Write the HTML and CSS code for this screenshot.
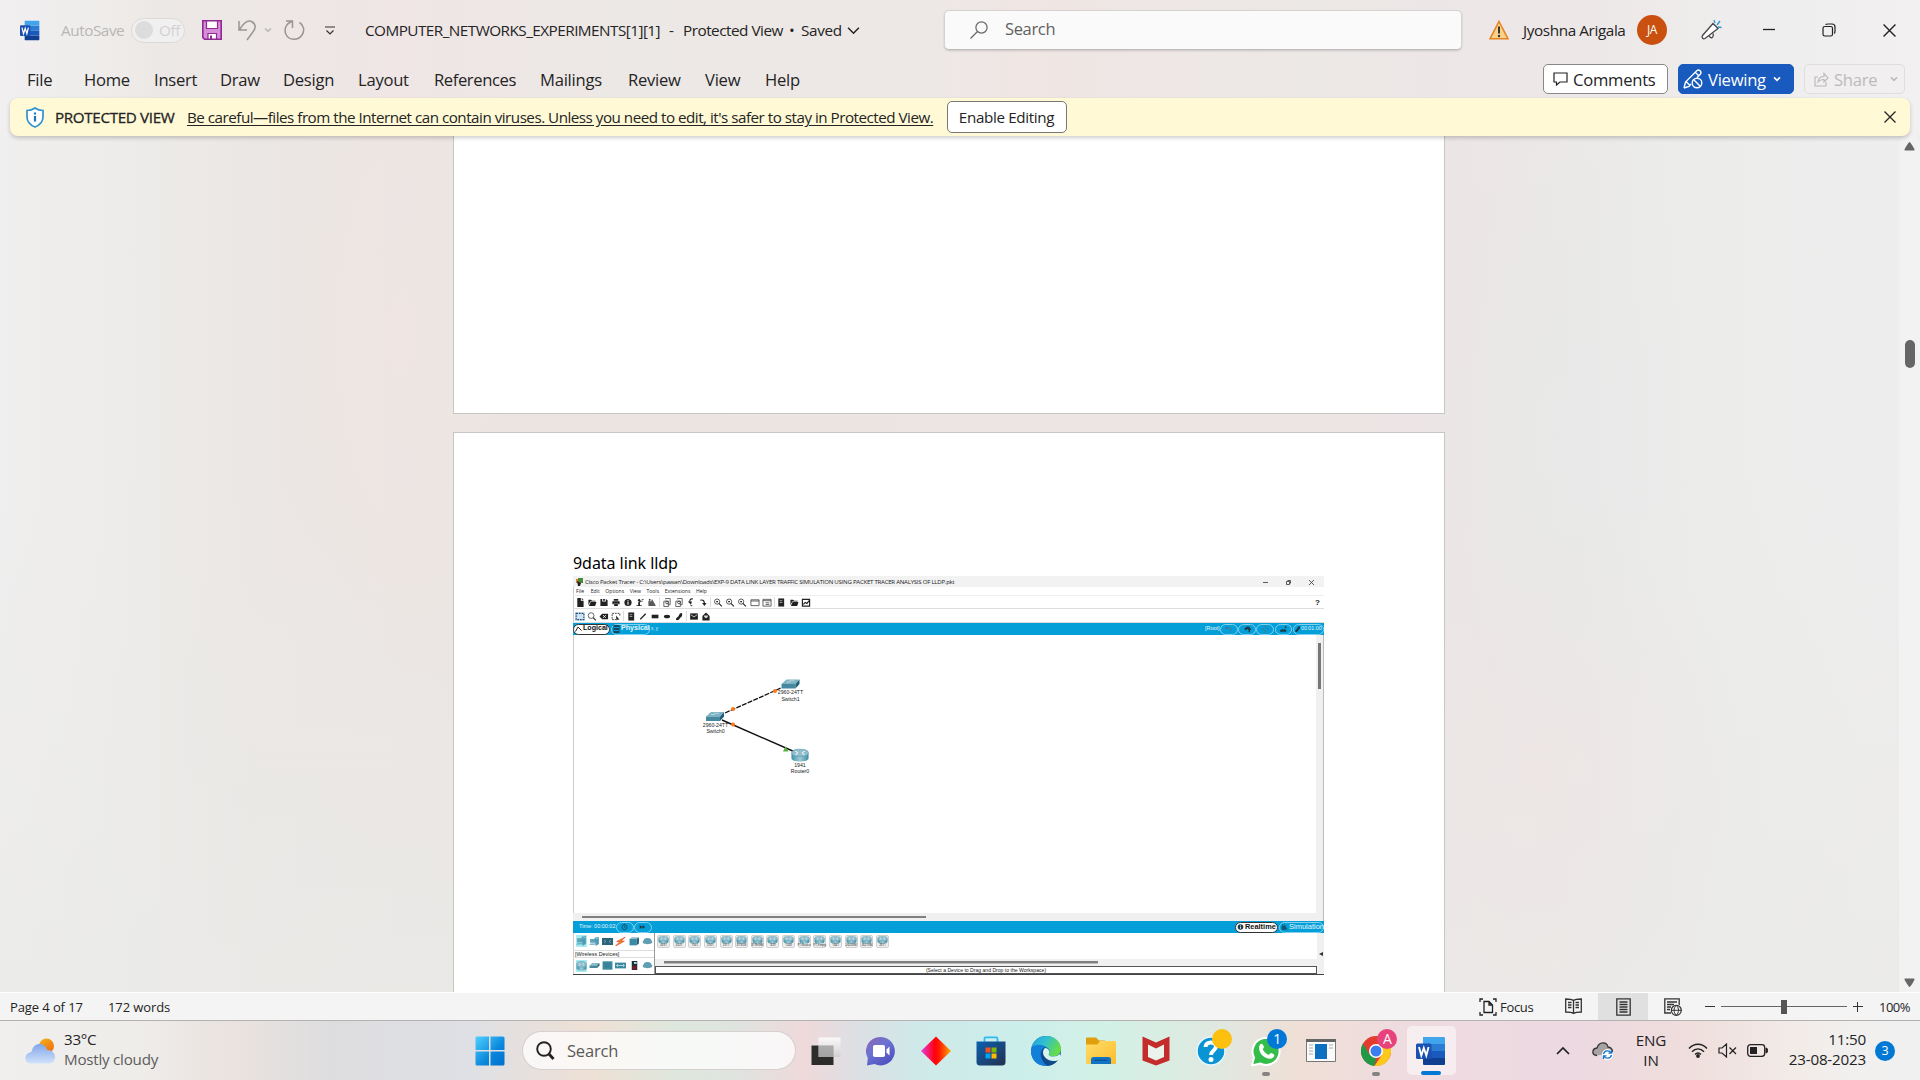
FILE: index.html
```html
<!DOCTYPE html>
<html lang="en">
<head>
<meta charset="utf-8">
<title>COMPUTER_NETWORKS_EXPERIMENTS - Word</title>
<link rel="stylesheet" href="styles.css">
</head>
<body>
<svg class="defs" width="0" height="0">
  <defs>
    <linearGradient id="gWin" x1="0" y1="0" x2="1" y2="1"><stop offset="0" stop-color="#4fd0ff"/><stop offset=".6" stop-color="#0a86dc"/><stop offset="1" stop-color="#0070cc"/></linearGradient>
    <linearGradient id="gCloud" x1="0" y1="0" x2="0" y2="1"><stop offset="0" stop-color="#82a6ea"/><stop offset="1" stop-color="#d0e2fa"/></linearGradient>
    <linearGradient id="gSun" x1="0" y1="0" x2=".6" y2="1"><stop offset="0" stop-color="#f0b323"/><stop offset="1" stop-color="#f2700a"/></linearGradient>
    <linearGradient id="gChat" x1="0" y1="0" x2=".7" y2="1"><stop offset="0" stop-color="#8f62ae"/><stop offset=".45" stop-color="#6d74d2"/><stop offset="1" stop-color="#4e4fc0"/></linearGradient>
    <linearGradient id="gDia"><stop offset="0" stop-color="#e73ce0"/><stop offset=".45" stop-color="#ff0010"/><stop offset=".6" stop-color="#ff1800"/><stop offset="1" stop-color="#ffa800"/></linearGradient>
    <linearGradient id="gStore" x1="0" y1="0" x2="1" y2="1"><stop offset="0" stop-color="#0d60b0"/><stop offset="1" stop-color="#23304f"/></linearGradient>
    <linearGradient id="gEdge" x1="0" y1="0" x2="1" y2=".4"><stop offset="0" stop-color="#1c9ee0"/><stop offset=".5" stop-color="#32c0cf"/><stop offset="1" stop-color="#66dc48"/></linearGradient>
    <linearGradient id="gFold" x1="0" y1="0" x2="1" y2="1"><stop offset="0" stop-color="#ffdc6a"/><stop offset="1" stop-color="#fbbd2c"/></linearGradient>
    <linearGradient id="gTv" x1="0" y1="0" x2="0" y2="1"><stop offset="0" stop-color="#fff"/><stop offset="1" stop-color="#cfcfcf"/></linearGradient>
    <linearGradient id="gDev" x1="0" y1="0" x2="1" y2="0"><stop offset="0" stop-color="#3f93ab"/><stop offset=".5" stop-color="#9fcbd6"/><stop offset="1" stop-color="#3f8ba2"/></linearGradient>
    <symbol id="word" viewBox="0 0 30 30">
      <path d="M7 1h21a1 1 0 0 1 1 1v6H7z" fill="#41a5ee"/><path d="M7 8h22v7H7z" fill="#2b7cd3"/><path d="M7 15h22v7H7z" fill="#185abd"/><path d="M7 22h22v6a1 1 0 0 1-1 1H8a1 1 0 0 1-1-1z" fill="#103f91"/>
      <rect x="0" y="7.500" width="15.500" height="15.500" rx="1.500" fill="#1a50b0"/><path d="M3 11l2.300 8.500L7.800 12l2.500 7.500L12.600 11" fill="none" stroke="#fff" stroke-width="1.900"/>
    </symbol>
    <symbol id="chev" viewBox="0 0 12 8"><path d="M1 1.500l5 5 5-5" fill="none" stroke="currentColor" stroke-width="1.400"/></symbol>
    <symbol id="chevb" viewBox="0 0 12 8"><path d="M1.500 1.500L6 6l4.500-4.500" fill="none" stroke="currentColor" stroke-width="2.300"/></symbol>
    <symbol id="close" viewBox="0 0 12 12"><path d="M.5.5l11 11M11.500.5l-11 11" stroke="currentColor" stroke-width="1.300" fill="none"/></symbol>
    <symbol id="doc" viewBox="0 0 10 10"><path d="M2 0h4v3h3v7H2zM7 0l2 2H7z"/></symbol>
    <symbol id="folder" viewBox="0 0 10 10"><path d="M1 2h3l1 1h4v1H3L1 8zM3.500 4.500H10L8.500 9H1.500z"/></symbol>
    <symbol id="floppy" viewBox="0 0 10 10"><path d="M1 1h2v3h4V1l2 1.500V9H1zM4 1h2v2H4z"/></symbol>
    <symbol id="print" viewBox="0 0 10 10"><path d="M2.500 1h5v2h-5zM1 3.500h8V7H7.500V6h-5v1H1zM3 6.500h4V9H3z"/></symbol>
    <symbol id="info" viewBox="0 0 10 10"><circle cx="5" cy="5" r="4"/><path d="M5 2.500v1M5 4.300v3.200" stroke="#fff" stroke-width="1.200"/></symbol>
    <symbol id="time" viewBox="0 0 10 10"><circle cx="5" cy="5.300" r="3.500" fill="none" stroke="#1a3c49" stroke-width="1.100"/><path d="M4 .8h2M5 3.500v2l1.500.5" fill="none" stroke="#1a3c49"/></symbol>
    <symbol id="user" viewBox="0 0 10 10"><path d="M1 9h6V8H5V5l1-1h2V3H5L3 5v3H1zM7 1h2v1H7z"/><circle cx="4" cy="2.500" r="1.300"/></symbol>
    <symbol id="tri" viewBox="0 0 10 10"><path d="M1 9V3l3 1 1-3 4 7v1z" fill-opacity=".75"/><circle cx="2.500" cy="2" r="1"/></symbol>
    <symbol id="hill" viewBox="0 0 10 10"><path d="M0 9V7l3-2 2 1 2-1 2 2v2z"/><circle cx="8" cy="2.500" r="1.300"/></symbol>
    <symbol id="copy" viewBox="0 0 10 10"><path d="M1.500 3.500h5v6h-5zM3.500 1.500v-1h5v7h-2" fill="none" stroke="#555"/><circle cx="5" cy="5" r="1.500" fill="none" stroke="#444"/></symbol>
    <symbol id="undo" viewBox="0 0 10 10"><path d="M7 1C4.500.5 3.500 2 3.700 4" fill="none" stroke="#222" stroke-width="1.300"/><path d="M1.500 4h4.500L5 7.500z"/><path d="M4.500 8.500h2" stroke="#222"/></symbol>
    <symbol id="redo" viewBox="0 0 10 10"><path d="M2 2.500c3-.8 4.500.5 4.500 3.500" fill="none" stroke="#222" stroke-width="1.300"/><path d="M4 5.500h5L6.500 9z"/></symbol>
    <symbol id="back" viewBox="0 0 10 10"><path d="M3 1.500L1 3.500l2 2M1 3.500h5c3 0 3 4 1 5" fill="none" stroke="#53707b" stroke-width="1.400"/></symbol>
    <symbol id="move" viewBox="0 0 10 10"><path d="M5 0v3M5 7v3M0 5h3M7 5h3" stroke="#53707b" stroke-width="1.600"/></symbol>
    <symbol id="zoomi" viewBox="0 0 10 10"><circle cx="4" cy="4" r="2.900" fill="none" stroke="#333" stroke-width=".9"/><path d="M6 6l3.300 3.300M3 4h2" stroke="#222" stroke-width="1.200"/></symbol>
    <symbol id="mag" viewBox="0 0 10 10"><circle cx="4" cy="4" r="3.200" fill="none" stroke="#444" stroke-width=".9"/><path d="M6.300 6.300l3 3" stroke="#222" stroke-width="1.200"/></symbol>
    <symbol id="win" viewBox="0 0 10 10"><path d="M.5 2h9v6.500h-9zM.5 3.300h9" fill="none" stroke="#444" stroke-width=".9"/></symbol>
    <symbol id="list" viewBox="0 0 10 10"><path d="M.5 1.500h9v7.500h-9zM.5 3h9M3.500 5.300h4M3.500 7.200h4" fill="none" stroke="#444" stroke-width=".9"/></symbol>
    <symbol id="note" viewBox="0 0 10 10"><path d="M2 .5h6.500v9H2z"/><path d="M3.500 3h3M3.500 5h3" stroke="#ccc" stroke-width=".8"/></symbol>
    <symbol id="chart" viewBox="0 0 10 10"><path d="M1 1.500h8v7.500H1zM2 7l2-2 2 1 2.500-3" fill="none" stroke="#222" stroke-width="1.300"/></symbol>
    <symbol id="sel" viewBox="0 0 10 10"><path d="M.7 1.500h8.600v7H.7z" fill="none" stroke="#2a4c68" stroke-width="1.200" stroke-dasharray="2 1"/></symbol>
    <symbol id="sel2" viewBox="0 0 10 10"><path d="M9.300 4V1.500H.7v7H5" fill="none" stroke="#444" stroke-width="1.100" stroke-dasharray="2 1"/><path d="M5 4l4 4.500-2-.3-1.500 1.300z"/></symbol>
    <symbol id="del" viewBox="0 0 10 10"><path d="M0 5l3-3h6.500v6H3z"/><path d="M4 3.500l3 3M7 3.500l-3 3" stroke="#fff"/></symbol>
    <symbol id="line" viewBox="0 0 10 10"><path d="M2 8l6-6" stroke="#222" stroke-width="1.400"/></symbol>
    <symbol id="rect" viewBox="0 0 10 10"><path d="M1.300 3h7.500v4H1.300z"/></symbol>
    <symbol id="oval" viewBox="0 0 10 10"><ellipse cx="5" cy="5" rx="3.500" ry="2"/></symbol>
    <symbol id="blob" viewBox="0 0 10 10"><path d="M2 9C.5 6.500 4 6 5 3.500 6 1 9 0 8.500 3.500 8 6 7 5 6 7S3 9.500 2 9z"/></symbol>
    <symbol id="mail" viewBox="0 0 10 10"><path d="M.7 1.500h8.600v7H.7z"/><path d="M1.500 3L5 5.500 8.500 3" stroke="#fff" stroke-width=".8" fill="none"/></symbol>
    <symbol id="omail" viewBox="0 0 10 10"><path d="M1 4.500L5 .5l4 4v5H1z"/><path d="M3 4h4v1.500L5 7 3 5.500z" fill="#ddd"/></symbol>
    <symbol id="hut" viewBox="0 0 10 10"><path d="M0 5l4-3.500h3L10 5v1.500H8.500v3H6.500V6l-2-1-1.500 2z"/></symbol>
    <symbol id="router" viewBox="0 0 20 14" preserveAspectRatio="none"><path d="M1 5v5c0 2 4 3.500 9 3.500s9-1.500 9-3.500V5z" fill="url(#gDev)"/><ellipse cx="10" cy="4.500" rx="9" ry="4" fill="#8fbdcb" stroke="#5b9bb0" stroke-width=".6"/><path d="M5 3l3 1.200M15 3l-3 1.200M5 6.300L8 5M15 6.300L12 5" stroke="#f3fafc" stroke-width="1"/></symbol>
    <symbol id="switch" viewBox="0 0 20 11"><path d="M1 5.500L6 1h13l-4 4.500z" fill="#7fb2c3"/><path d="M1 5.500h14V10H1z" fill="#4589a1"/><path d="M15 5.500L19 1v4.500L15 10z" fill="#215e79"/><path d="M6 3.500h4M9 2.300h5" stroke="#d8edf3" stroke-width=".6"/></symbol>
    <symbol id="pc" viewBox="0 0 20 14" preserveAspectRatio="none"><path d="M10 1l8-1v11l-6 3z" fill="#4e9cb5"/><path d="M2 3h9v6H2zM0 12h10l2-2H3z" fill="#5fa3b9"/><path d="M13 3l4-1" stroke="#c5e1e9"/></symbol>
    <symbol id="box" viewBox="0 0 20 14" preserveAspectRatio="none"><path d="M1 .5h18v13H1z" fill="#3b88a1"/><path d="M5 5h10M5 9h10" stroke="#2f7188"/></symbol>
    <symbol id="hub" viewBox="0 0 20 14" preserveAspectRatio="none"><path d="M0 1.500h20v11H0z" fill="#2c6379"/><path d="M4 5l3 2-3 2M16 5l-3 2 3 2" stroke="#a7ccd8" fill="none"/></symbol>
    <symbol id="wan" viewBox="0 0 20 14" preserveAspectRatio="none"><path d="M0 2.500h20v9H0z" fill="#3b88a1"/><path d="M3 7h14M5 5L3 7l2 2M15 5l2 2-2 2" stroke="#d5e9ef" stroke-width="1.300" fill="none"/></symbol>
    <symbol id="file" viewBox="0 0 20 14" preserveAspectRatio="none"><path d="M1 3h13v10H1z" fill="#3b8ba5"/><path d="M1 3l4-2.500h13L14 3z" fill="#8dbdcb"/><path d="M14 3l4-2.500V10l-4 3z" fill="#215e79"/></symbol>
    <symbol id="bolt" viewBox="0 0 20 14" preserveAspectRatio="none"><path d="M19 0L3 7l6 0-8 7 16-7.500-6-.5z" fill="#f78a1f" stroke="#d73c1c" stroke-width="1"/></symbol>
    <symbol id="cloudd" viewBox="0 0 20 14" preserveAspectRatio="none"><path d="M2 10a3.500 3.500 0 0 1 1-5 7 5 0 0 1 14 0 3.500 3.500 0 0 1 1 5c-3 3-13 3-16 0z" fill="#5f9db2"/></symbol>
    <symbol id="phone" viewBox="0 0 20 14" preserveAspectRatio="none"><path d="M5 0h10v14H5z" fill="#14303b"/><path d="M6 8h8v5H6z" fill="#7d1d22"/><path d="M9 1.500h5v3H9z" fill="#bed5dc"/></symbol>
  </defs>
</svg>

<div class="app">
  <header class="titlebar">
    <div class="quick">
      <svg class="wlogo" width="20" height="21" viewBox="0 0 30 30" preserveAspectRatio="none"><use href="#word" width="30" height="30"/></svg>
      <span class="autosave">AutoSave</span>
      <span class="toggle"><i></i><b>Off</b></span>
      <svg class="save" width="20" height="20" viewBox="0 0 20 20"><path d="M.8.8h18.400v18.400H2.500L.8 17.500z" fill="#d68ed8" stroke="#902a94" stroke-width="1.600"/><path d="M4.500 1v7.500h11V1zM6 19v-5.500h8.500V19z" fill="#fff" stroke="#902a94" stroke-width="1.200"/><path d="M8 15.500h2v3.500H8z" fill="#902a94"/></svg>
      <svg class="undo" width="19" height="21" viewBox="0 0 19 21"><path d="M1 1v9h8M1.500 9.500C5 4 9-.5 13.500 1.500c5 2.500 4.500 7.500 1 11L9 20" fill="none" stroke="#989593" stroke-width="1.500"/></svg>
      <svg class="uchev" width="8" height="6"><use href="#chevb"/></svg>
      <svg class="redo" width="21" height="21" viewBox="0 0 21 21"><path d="M2 1h6.500v7M8 1.500C.5 4 .3 11 2 14.500c3 6 12 6.500 16 .5 3.200-5 1.500-10-2.500-12.500" fill="none" stroke="#989593" stroke-width="1.500"/></svg>
      <svg class="cust" width="10" height="9" viewBox="0 0 10 9"><path d="M0 1h10M1.500 4.500L5 8l3.500-3.500" fill="none" stroke="#333" stroke-width="1.200"/></svg>
    </div>
    <div class="doctitle">
      <span class="fname">COMPUTER_NETWORKS_EXPERIMENTS[1][1]</span><span class="dash">-</span><span class="pview">Protected View</span><span class="dot">•</span><span class="saved">Saved</span>
      <svg width="13" height="9"><use href="#chev"/></svg>
    </div>
    <div class="search"><svg width="18" height="18" viewBox="0 0 18 18"><circle cx="11.500" cy="6.500" r="5.600" fill="none" stroke="#666" stroke-width="1.200"/><path d="M7.500 10.500L.5 17.500" stroke="#666" stroke-width="1.300"/></svg><span>Search</span></div>
    <div class="account">
      <svg width="20" height="20" viewBox="0 0 20 20"><path d="M10 1.500L19 18.800H1z" fill="#fbd28b" stroke="#e58424" stroke-width="1.600"/><path d="M10 6.500v7" stroke="#333" stroke-width="2"/><circle cx="10" cy="16" r="1.200" fill="#333"/></svg>
      <span class="uname">Jyoshna Arigala</span>
      <span class="avatar">JA</span>
      <svg class="mega" width="21" height="21" viewBox="0 0 21 21"><path d="M1.500 15.500L12 3.500l5 5L4 18.500c-2 1-3.500-1-2.500-3zM8.500 16c1 3 4.500 2 3.500-2.500" fill="#fff" stroke="#444" stroke-width="1.300"/><path d="M13 0l1 3M19 1l-3 4M20.500 7.500l-3.500-.5" stroke="#2f93cf" stroke-width="1.300"/></svg>
    </div>
    <div class="winbtns">
      <svg width="12" height="12" viewBox="0 0 12 12"><path d="M0 5.500h12" stroke="#222" stroke-width="1.300"/></svg>
      <svg width="14" height="14" viewBox="0 0 14 14"><rect x="1" y="3.500" width="9.500" height="9.500" rx="1.800" fill="none" stroke="#222" stroke-width="1.200"/><path d="M3.500 1.500C4 1 5 1 6 1h4c2 0 3 1.300 3 3v4c0 1 0 2-.8 2.500" fill="none" stroke="#222" stroke-width="1.200"/></svg>
      <svg width="13" height="13"><use href="#close"/></svg>
    </div>
  </header>

  <nav class="ribbon">
    <div class="tabs"><span>File</span><span>Home</span><span>Insert</span><span>Draw</span><span>Design</span><span>Layout</span><span class="tight">References</span><span>Mailings</span><span>Review</span><span>View</span><span>Help</span></div>
    <div class="actions">
      <span class="btn comments"><svg width="15" height="14" viewBox="0 0 15 14"><path d="M1 1h13v9H7l-3.500 3v-3H1z" fill="none" stroke="#222" stroke-width="1.200"/></svg>Comments</span>
      <span class="btn viewing"><svg width="20" height="20" viewBox="0 0 20 20"><path d="M1 19l1.500-6L14 1.500c2-1.500 5 1 3.500 3.500L14 8.500M8 15l-2 2.500L1 19M3 12.500l4 4M12.500 3.500l3.500 3.500" fill="none" stroke="#fff" stroke-width="1.400"/><circle cx="14" cy="14" r="4.800" fill="none" stroke="#fff" stroke-width="1.400"/><path d="M10.500 10.500l7 7" stroke="#fff" stroke-width="1.400"/></svg>Viewing<svg class="c" width="8" height="6"><use href="#chevb"/></svg></span>
      <span class="btn share"><svg width="15" height="15" viewBox="0 0 15 15"><path d="M4 5H1v9h11v-4M4 10c.5-4 3-5.500 6-5.500V1.500L14 6l-4 4V7.500C7.500 7.500 5.500 8 4 10z" fill="none" stroke="#b9b9b9" stroke-width="1.100"/></svg>Share<svg class="c" width="8" height="6"><use href="#chevb"/></svg></span>
    </div>
  </nav>

  <div class="notice">
    <svg width="18" height="21" viewBox="0 0 18 21"><path d="M9 1c2.500 1.800 5 2.500 8 2.500V10c0 5-3 8-8 10-5-2-8-5-8-10V3.500C4 3.500 6.500 2.800 9 1z" fill="#fff" stroke="#2f93cf" stroke-width="1.700"/><path d="M9 5.500v2M9 9v5.500" stroke="#1b75bb" stroke-width="2.200"/></svg>
    <span class="ptitle">PROTECTED VIEW</span>
    <span class="pmsg">Be careful—files from the Internet can contain viruses. Unless you need to edit, it's safer to stay in Protected View.</span>
    <span class="enable">Enable Editing</span>
    <svg class="x" width="12" height="12"><use href="#close"/></svg>
  </div>

  <main class="workarea">
    <div class="pages">
      <section class="page first"></section>
      <section class="page second">
        <p class="caption">9data link lldp</p>
        <div class="tracer">
          <div class="t-title"><svg width="8" height="8" viewBox="0 0 8 8"><path d="M1 1h3v4H1z" fill="#d98030"/><path d="M3 0h5v5H3z" fill="#4b8a3d"/><path d="M2 3l4 2-1 3H3z" fill="#222"/></svg><span>Cisco Packet Tracer - C:\Users\pawan\Downloads\EXP-9 DATA LINK LAYER TRAFFIC SIMULATION USING PACKET TRACER ANALYSIS OF LLDP.pkt</span>
            <div class="t-win"><svg width="5" height="5" viewBox="0 0 5 5"><path d="M0 2.500h5" stroke="#333" stroke-width=".8"/></svg><svg width="5" height="5" viewBox="0 0 5 5"><path d="M.5 1.500h3v3h-3zM1.500.5h3v3" fill="none" stroke="#333" stroke-width=".8"/></svg><svg width="5" height="5" viewBox="0 0 5 5"><path d="M0 0l5 5M5 0L0 5" stroke="#333" stroke-width=".8"/></svg></div>
          </div>
          <div class="t-menu"><span>File</span><span>Edit</span><span>Options</span><span>View</span><span>Tools</span><span>Extensions</span><span>Help</span></div>
          <div class="t-tools one">
            <svg><use href="#doc"/></svg><svg><use href="#folder"/></svg><svg><use href="#floppy"/></svg><svg><use href="#print"/></svg><svg><use href="#info"/></svg><svg><use href="#user"/></svg><svg><use href="#tri"/></svg><i></i>
            <svg><use href="#copy"/></svg><svg><use href="#copy"/></svg><svg><use href="#undo"/></svg><svg><use href="#redo"/></svg><i></i>
            <svg><use href="#zoomi"/></svg><svg><use href="#zoomi"/></svg><svg><use href="#zoomi"/></svg><svg><use href="#win"/></svg><svg><use href="#list"/></svg><i></i>
            <svg><use href="#note"/></svg><svg><use href="#folder"/></svg><svg><use href="#chart"/></svg><b>?</b>
          </div>
          <div class="t-tools two">
            <svg class="on"><use href="#sel"/></svg><svg><use href="#mag"/></svg><svg><use href="#del"/></svg><svg><use href="#sel2"/></svg><i></i>
            <svg><use href="#note"/></svg><svg><use href="#line"/></svg><svg><use href="#rect"/></svg><svg><use href="#oval"/></svg><svg><use href="#blob"/></svg><i></i>
            <svg><use href="#mail"/></svg><svg><use href="#omail"/></svg>
          </div>
          <div class="t-bar">
            <span class="pill solid logical"><svg width="7" height="7" viewBox="0 0 7 7"><path d="M.5 6L3 1.500 6.500 5" fill="none" stroke="#222"/></svg>Logical</span>
            <span class="pill physical"><svg width="7" height="8" viewBox="0 0 7 8"><path d="M.5 0h6v8h-6z" fill="#17475c"/><path d="M1 2.500h5M1 5.500h5" stroke="#0aa0dc"/></svg>Physical</span>
            <span class="xy">x, y</span>
            <span class="root">[Root]</span>
            <span class="pill mini"><svg><use href="#back"/></svg></span><span class="pill mini"><svg><use href="#hut"/></svg></span><span class="pill mini"><svg><use href="#move"/></svg></span><span class="pill mini"><svg><use href="#hill"/></svg></span>
            <span class="pill clock"><svg><use href="#blob"/></svg>00:01:00</span>
          </div>
          <div class="t-space">
            <svg class="net" width="742" height="277" viewBox="573 635 742 277">
              <path d="M725 713L781 688" stroke="#111" stroke-width="1.300" stroke-dasharray="5 1.200"/>
              <path d="M722 720L795 752" stroke="#111" stroke-width="1.400"/>
              <g fill="#ff7416"><circle cx="733" cy="709" r="2"/><circle cx="775" cy="691" r="2"/><circle cx="733" cy="724.500" r="2"/></g>
              <path d="M783 751.500l2.500-5 3 5z" fill="#54b13c"/>
              <use href="#switch" x="705" y="711" width="20" height="11"/><use href="#switch" x="780.500" y="678.500" width="20" height="11"/><use href="#router" x="790.500" y="748.500" width="19" height="13.500"/>
              <g class="lbl"><text x="715.500" y="727">2960-24TT</text><text x="715.500" y="733">Switch0</text><text x="790.500" y="694">2960-24TT</text><text x="790.500" y="700.500">Switch1</text><text x="800" y="767">1941</text><text x="800" y="773">Router0</text></g>
            </svg>
            <div class="vscroll"><i></i></div>
          </div>
          <div class="hscroll"><i></i></div>
          <div class="t-bar low">
            <span class="time">Time: 00:00:02</span><span class="pill mini"><svg><use href="#time"/></svg></span><span class="pill mini"><svg viewBox="0 0 10 10"><path d="M1 2l4 3-4 3zM5 2l4 3-4 3z"/></svg></span>
            <span class="pill solid realtime"><svg><use href="#info"/></svg>Realtime</span><span class="pill simu"><svg><use href="#tri"/></svg>Simulation</span>
          </div>
          <div class="t-palette">
            <div class="kinds">
              <div class="row"><svg class="on"><use href="#pc"/></svg><svg><use href="#pc"/></svg><svg><use href="#hub"/></svg><svg><use href="#bolt"/></svg><svg><use href="#file"/></svg><svg class="low"><use href="#cloudd"/></svg></div>
              <div class="wl">[Wireless Devices]</div>
              <div class="row"><svg class="on"><use href="#router"/></svg><svg><use href="#switch"/></svg><svg><use href="#box"/></svg><svg><use href="#wan"/></svg><svg><use href="#phone"/></svg><svg class="low"><use href="#cloudd"/></svg></div>
            </div>
            <div class="devs">
              <div class="list">
                <span><svg><use href="#router"/></svg>4331</span><span><svg><use href="#router"/></svg>4321</span><span><svg><use href="#router"/></svg>1941</span><span><svg><use href="#router"/></svg>2901</span><span><svg><use href="#router"/></svg>2911</span><span><svg><use href="#router"/></svg>819IOX</span><span><svg><use href="#router"/></svg>819HGW</span><span><svg><use href="#router"/></svg>829</span><span><svg><use href="#router"/></svg>1240</span><span><svg><use href="#router"/></svg>PT-Router</span><span><svg><use href="#router"/></svg>PT-Empty</span><span><svg><use href="#router"/></svg>1841</span><span><svg><use href="#router"/></svg>2620XM</span><span><svg><use href="#router"/></svg>2621XM</span><span><svg><use href="#router"/></svg>2811</span>
              </div>
              <div class="dscroll"><i></i></div>
              <div class="hint">(Select a Device to Drag and Drop to the Workspace)</div>
            </div>
            <div class="fold"><svg width="4" height="4" viewBox="0 0 4 4"><path d="M4 0v4L0 2z" fill="#333"/></svg></div>
          </div>
        </div>
      </section>
    </div>
    <div class="scroll"><svg width="11" height="9" viewBox="0 0 11 9"><path d="M5.500 0c.7 0 5 6.500 5 7.500s-.5 1-1 1h-8c-1 0-1-.5-1-1S4.800 0 5.500 0z" fill="#666"/></svg><i></i><svg width="11" height="9" viewBox="0 0 11 9"><path d="M5.500 9c.7 0 5-6.500 5-7.500s-.5-1-1-1h-8c-1 0-1 .5-1 1S4.800 9 5.500 9z" fill="#666"/></svg></div>
  </main>

  <div class="status">
    <span class="pg">Page 4 of 17</span><span class="wc">172 words</span>
    <span class="focus"><svg width="18" height="18" viewBox="0 0 18 18"><path d="M4 1H1v3M14 1h3v3M4 17H1v-3M14 17h3v-3M5 3.500h5l3.500 3.500v7.500H5zM10 3.500V7h3.500" fill="none" stroke="#222" stroke-width="1.300"/></svg>Focus</span>
    <span class="vm"><svg width="17" height="17" viewBox="0 0 17 17"><path d="M8.500 2.500C6.500 1 4 1 .7 1v13c3 0 6 0 7.800 1.500C10.500 14 13 14 16.300 14V1c-3 0-6 0-7.800 1.500zV16M3 4.500h3.500M3 7h3.500M3 9.500h3.500M10.500 4.500H14M10.500 7H14M10.500 9.500H14" fill="none" stroke="#333" stroke-width="1.300"/></svg></span>
    <span class="vm on"><svg width="15" height="18" viewBox="0 0 15 18"><path d="M.8.8h13.400v16.400H.8zM3.500 4h8M3.500 6.500h8M3.500 9h8M3.500 11.500h8M3.500 14h8" fill="none" stroke="#333" stroke-width="1.300"/></svg></span>
    <span class="vm"><svg width="18" height="18" viewBox="0 0 18 18"><path d="M7 15H.8V.8h14.400V7M3 4h10M3 6.500h7M3 9h4M3 11.500h3" fill="none" stroke="#333" stroke-width="1.300"/><circle cx="12.300" cy="12.300" r="5" fill="#f4f4f4" stroke="#333" stroke-width="1.200"/><path d="M7.500 12.300h10M12.300 7.300c-3 3-3 7 0 10M12.300 7.300c3 3 3 7 0 10" fill="none" stroke="#333"/></svg></span>
    <svg class="minus" width="10" height="10" viewBox="0 0 10 10"><path d="M0 4.500h10" stroke="#333"/></svg>
    <span class="slider"><i></i></span>
    <svg class="plus" width="10" height="10" viewBox="0 0 10 10"><path d="M0 4.500h10M4.500 0v10" stroke="#333"/></svg>
    <span class="pct">100%</span>
  </div>

  <footer class="taskbar">
    <svg class="weather" width="31" height="26" viewBox="0 0 31 26"><circle cx="21.500" cy="8" r="7.500" fill="url(#gSun)"/><path d="M7 25.500c-9 0-8.500-10.500-.5-11.500C8 4 20 3.500 22 12c10-.5 11 13 1 13.500z" fill="url(#gCloud)"/></svg>
    <div class="wtext"><span>33°C</span><em>Mostly cloudy</em></div>
    <svg class="start" width="30" height="30" viewBox="0 0 30 30"><path d="M1.500.5H14V14H.5V1.500zM15.500.5H28l1.500 1V14h-14zM.5 15.500H14V29.500H1.500l-1-1zM15.500 15.500h14v13l-1 1h-13z" fill="url(#gWin)"/></svg>
    <div class="tsearch"><svg width="19" height="19" viewBox="0 0 19 19"><circle cx="8" cy="8" r="6.800" fill="none" stroke="#222" stroke-width="1.900"/><path d="M12.500 12.500l5 5.500" stroke="#222" stroke-width="2.800"/></svg><span>Search</span></div>
    <div class="apps">
      <span><svg width="30" height="28" viewBox="0 0 30 28"><path d="M.5 8.500h22V28H.5z" fill="#2c2d2b"/><path d="M7.500.5h22V20h-22z" fill="url(#gTv)" fill-opacity=".82"/><path d="M7.500 8.500h15V20h-15z" fill="#999" fill-opacity=".6"/></svg></span>
      <span><svg width="30" height="30" viewBox="0 0 30 30"><path d="M15 1a14.200 14.200 0 1 1-6.500 27L1 29.500l.8-7.500A14.200 14.200 0 0 1 15 1z" fill="url(#gChat)"/><rect x="7" y="9" width="12" height="12" rx="1.800" fill="#fff"/><path d="M20.500 13.500l3-3v9l-3-3z" fill="#fff"/></svg></span>
      <span><svg width="30" height="30" viewBox="0 0 30 30"><path d="M15 .5L30 15 15 29.500 0 15z" fill="url(#gDia)"/></svg></span>
      <span><svg width="30" height="30" viewBox="0 0 30 30"><path d="M8.500 6V2.800c0-1 .4-1.500 1.300-1.500h10.400c.9 0 1.300.5 1.300 1.500V6" fill="none" stroke="#2dbcf2" stroke-width="1.800"/><path d="M.5 5.500h29V26a3.500 3.500 0 0 1-3.500 3.500H4A3.500 3.500 0 0 1 .5 26z" fill="url(#gStore)"/><path d="M9.500 11.500h5v5h-5z" fill="#f25022"/><path d="M15.500 11.500h5v5h-5z" fill="#7fba00"/><path d="M9.500 17.500h5v5h-5z" fill="#00a4ef"/><path d="M15.500 17.500h5v5h-5z" fill="#ffb900"/></svg></span>
      <span><svg width="30" height="30" viewBox="0 0 30 30"><circle cx="15" cy="15" r="15" fill="#0c62b8"/><path d="M.3 12C2 4 8.500 0 15.500 0 24 0 30 6 30 13c0 4.500-3.500 7.500-8 7.500-3.500 0-5-1.500-4-3s1-5-3-6.500S3 8 .3 12z" fill="url(#gEdge)"/><path d="M.2 13C4 7.500 11 8 14.500 11c-7 1.500-7 12.500 2 18.800C5 31-1 22 .2 13z" fill="#1280d8"/><path d="M14.500 11c-4 3-3.500 14 13 12-3 5-7.500 6.700-11 6.800C8 24 9 13 14.500 11z" fill="#114a8b"/><path d="M18 17.500c-1 1.500.5 3 4 3 3 0 5-.8 6.800-2.500L30 23l-3.500 1.500C18 27 12 21 12 16.500c0-2 1-3.600 2-4.500 4 .5 5 3.500 4 5.500z" fill="#d6f3ec"/></svg></span>
      <span><svg width="30" height="28" viewBox="0 0 30 28"><path d="M0 1.500Q0 .5 1 .5h9l3 3h6V9H0z" fill="#e0a00e"/><path d="M0 7.500h11.500L14 4h14.500Q30 4 30 5.500v20.500q0 1-1 1H1q-1 0-1-1z" fill="url(#gFold)"/><path d="M5 27v-4.500Q5 20 7.500 20h15Q25 20 25 22.500V27z" fill="#1272c4"/><path d="M8.500 23.200h13" stroke="#0b4a86"/></svg></span>
      <span><svg width="28" height="30" viewBox="0 0 28 30"><path d="M.5.5L14 6.500 27.500.5v24L14 29.500.5 24.500z" fill="#c42b2b"/><path d="M6 8.500l8 4 8-4v12.500l-8 3.500-8-3.500z" fill="#e9f3ec"/></svg></span>
      <span class="has"><svg width="30" height="30" viewBox="0 0 30 30"><circle cx="15" cy="15" r="14" fill="#0a94d4" stroke="#e6f6fc" stroke-width="1.500"/><path d="M9.500 11c0-6 10.500-6 10.500-.5 0 4-5 4-5 8.500" fill="none" stroke="#fff" stroke-width="4"/><circle cx="15" cy="23.500" r="2.500" fill="#fff"/></svg><b class="yel"></b></span>
      <span class="has run"><svg width="30" height="30" viewBox="0 0 30 30"><path d="M1 29.500l2-8A13.500 13.500 0 1 1 9 27.500z" fill="#35bd4b" stroke="#fff" stroke-width="2"/><path d="M9 8.500c2-2 3 0 4 2.500-.5 1.500-1.500 2-1 2.700 1.500 2.500 3 4 5.500 5 1 .3 1.500-1.500 2.500-1.700 2.500 1 4 1.500 3 3.500-3 4.500-8.500 1.500-11.500-1S7 12 9 8.500z" fill="#fff"/></svg><b class="blu">1</b></span>
      <span><svg width="30" height="23" viewBox="0 0 30 23"><path d="M.5.5h29v22H.5z" fill="#fafafa" stroke="#777"/><path d="M0 0h30v3H0z" fill="#666"/><path d="M9 5h12v15H9z" fill="#0d6fc0"/><path d="M3 6h4M3 9h4M3 12h4M3 15h4M23 6h4M23 9h4" stroke="#aaa"/></svg></span>
      <span class="has run"><svg width="30" height="30" viewBox="0 0 30 30"><circle cx="15" cy="15" r="15" fill="#e33b2e"/><path d="M2 7.500L8.500 18.500 15 22l-1.500 8A15 15 0 0 1 2 7.500z" fill="#219a48"/><path d="M15 8h13.200A15 15 0 0 1 13.500 30L21 18.500z" fill="#fcc819"/><circle cx="15" cy="15" r="7" fill="#fff"/><circle cx="15" cy="15" r="5.500" fill="#3b7ded"/></svg><b class="pnk">A</b></span>
      <span class="active"><svg width="30" height="30"><use href="#word"/></svg></span>
    </div>
    <div class="tray">
      <svg class="up" width="14" height="9" viewBox="0 0 14 9"><path d="M1 8l6-6 6 6" fill="none" stroke="#222" stroke-width="1.700"/></svg>
      <svg class="od" width="22" height="19" viewBox="0 0 22 19"><path d="M5 14.500c-6-.5-5-7 0-7.500C7 0 15 .5 16 6c4 0 5 4 4 6" fill="#a8a3a3" stroke="#333" stroke-width="1.300"/><circle cx="15.500" cy="13.500" r="5.500" fill="#fff"/><path d="M11.500 13c1-4 6-4 7.500-1.200M19.500 14c-1 4-6 4-7.500 1.200M19.500 9v3.200h-3M11.500 18v-3.200h3" fill="none" stroke="#1877c9" stroke-width="1.300"/></svg>
      <div class="lang"><span>ENG</span><span>IN</span></div>
      <svg class="wifi" width="20" height="15" viewBox="0 0 20 15"><path d="M1 5.500C6-.2 14-.2 19 5.500M4 8.700c3.500-3.800 8.500-3.800 12 0M7 11.500c2-2 4-2 6 0" fill="none" stroke="#222" stroke-width="1.400"/><circle cx="10" cy="13" r="1.900" fill="#222"/></svg>
      <svg class="spk" width="19" height="15" viewBox="0 0 19 15"><path d="M1 5h3l4.500-4v13L4 10H1zM11.500 4.500l6.500 6.500M18 4.500L11.500 11" fill="none" stroke="#222" stroke-width="1.200"/></svg>
      <svg class="bat" width="21" height="13" viewBox="0 0 21 13"><rect x=".7" y=".7" width="17" height="11.600" rx="2.800" fill="none" stroke="#222" stroke-width="1.300"/><path d="M3 3h7v7H3z" fill="#222"/><path d="M19 4h.5c1.500 1 1.500 4 0 5H19z" stroke="#222" fill="#222"/></svg>
      <div class="clock2"><span>11:50</span><span>23-08-2023</span></div>
      <b class="num">3</b>
    </div>
  </footer>
</div>
</body>
</html>
```
FILE: styles.css
```css
* { box-sizing: border-box; }
body { margin: 0; width: 1920px; height: 1080px; overflow: hidden; font-family: "Open Sans", "Noto Sans", sans-serif; color: #242424; }
.defs { position: absolute; }
svg { display: block; flex: none; }
span, em, b { white-space: nowrap; font-style: normal; font-weight: normal; }
.app { display: flex; flex-direction: column; height: 1080px;
  background: linear-gradient(90deg, #f1eff0 0, #efedeb 90px, #ece8e5 160px, #efe6e5 400px, #ece8e5 620px, #ede8e6 940px, #f0e6e4 1020px, #ece8e6 1300px, #ede7e7 1560px, #efeeee 1780px, #f2f0f0 1920px); }

/* Title bar */
.titlebar { display: flex; align-items: center; height: 60px; flex: none; font-size: 15.300px; letter-spacing: -.35px; }
.quick { display: flex; align-items: center; width: 365px; padding-left: 20px; flex: none; }
.autosave { width: 70px; margin-left: 21px; color: #b9b6b5; letter-spacing: -.45px; }
.toggle { display: flex; align-items: center; width: 54px; height: 25px; border: 1px solid #dcdad9; border-radius: 13px; background: #f1f0f0; padding-left: 3px; color: #d3d0cf; }
.toggle i { width: 18px; height: 18px; border-radius: 50%; background: #dcdcdc; }
.toggle b { margin-left: 6px; }
.save { margin-left: 17px; }
.undo { margin-left: 16px; }
.uchev { margin-left: 7px; color: #bbb; }
.redo { margin-left: 12px; }
.cust { margin-left: 20px; }
.doctitle { display: flex; align-items: center; width: 579px; flex: none; }
.fname { width: 304px; letter-spacing: -.54px; }
.dash { width: 14px; }
.pview { width: 106px; letter-spacing: -.5px; }
.dot { width: 12px; }
.saved { width: 46px; }
.search { display: flex; align-items: center; width: 518px; height: 40px; border: 1px solid #d5d2d1; border-bottom-color: #bfbcbb; border-radius: 5px; background: #fafafa; box-shadow: 0 1px 2px rgba(0,0,0,.15); padding-left: 25px; font-size: 16.500px; color: #616161; flex: none; }
.search span { margin-left: 17px; margin-top: -3px; }
.account { display: flex; align-items: center; padding-left: 27px; width: 286px; flex: none; }
.uname { width: 114px; margin-left: 14px; letter-spacing: -.4px; }
.avatar { width: 30px; height: 30px; border-radius: 50%; background: #ca5010; color: #fff; font-size: 12px; line-height: 30px; text-align: center; }
.mega { margin-left: 34px; }
.winbtns { display: flex; align-items: center; gap: 47px; padding-left: 15px; }

/* Ribbon tabs */
.ribbon { display: flex; justify-content: space-between; height: 38px; flex: none; padding-left: 27px; padding-right: 15px; font-size: 16.600px; letter-spacing: -.25px; }
.tabs { display: grid; grid-template-columns: 57px 70px 66px 63px 75px 76px 106px 88px 77px 60px 40px; line-height: 39px; }
.tabs .tight { letter-spacing: -.4px; }
.actions { display: flex; gap: 10px; padding-top: 4px; }
.btn { display: flex; align-items: center; height: 30px; border-radius: 5px; font-size: 16.600px; border: 1px solid #8a8886; }
.comments { width: 125px; background: #fff; padding-left: 9px; gap: 5px; }
.viewing { width: 116px; background: #185abd; border-color: #185abd; color: #fff; padding-left: 4px; gap: 5px; }
.viewing .c { margin-left: 2px; }
.share { width: 101px; background: #f1efef; border-color: #e0dedd; color: #bdbbba; padding-left: 9px; gap: 5px; }
.share .c { margin-left: 8px; }

/* Protected view bar */
.notice { display: flex; align-items: center; height: 38px; margin: 0 10px; flex: none; border-radius: 8px; background: #fff9d6; box-shadow: 0 2px 4px rgba(0,0,0,.2); padding-left: 16px; font-size: 15.200px; position: relative; z-index: 1; }
.ptitle { width: 132px; margin-left: 11px; -webkit-text-stroke: .3px; letter-spacing: -.34px; }
.pmsg { width: 760px; text-decoration: underline; text-underline-offset: 2px; letter-spacing: -.494px; }
.enable { width: 120px; height: 32px; border: 1px solid #777; border-radius: 5px; background: #fff; line-height: 31px; text-align: center; letter-spacing: -.35px; padding-right: 1px; }
.x { margin-left: auto; margin-right: 14px; }

/* Document area */
.workarea { display: flex; height: 857px; flex: none; overflow: hidden; border-bottom: 1px solid #fff;
  background:
    radial-gradient(ellipse 140px 330px at 1560px 300px, rgba(230,233,232,.7), rgba(230,233,232,0)),
    radial-gradient(ellipse 200px 300px at 1540px 640px, rgba(238,229,229,.7), rgba(238,229,229,0)),
    radial-gradient(ellipse 110px 330px at 400px 200px, rgba(240,230,228,.8), rgba(240,230,228,0)),
    linear-gradient(180deg, rgba(235,233,231,0) 40%, rgba(234,234,232,.8) 100%),
    linear-gradient(90deg, #f0efef 0, #edecea 110px, #ebe7e4 250px, #ebe5e2 450px, #ece5e3 1000px, #ece5e5 1450px, #ebebea 1650px, #efeeee 1920px); }
.pages { width: 1899px; display: flex; flex-direction: column; padding-left: 453px; gap: 18px; }
.page { width: 992px; flex: none; background: #fff; border: 1px solid #c8c6c4; }
.first { height: 278px; border-top: 0; }
.second { height: 600px; padding: 118px 0 0 119px; }
.caption { margin: 0; height: 25px; font-family: "Noto Sans", sans-serif; font-size: 16px; line-height: 25px; letter-spacing: -.05px; color: #000; }
.scroll { width: 21px; display: flex; flex-direction: column; align-items: center; background: #f3f2f2; border-radius: 8px 8px 0 0; padding: 6px 0 5px; height: 856px; }
.scroll i { width: 10px; height: 28px; border-radius: 5px; background: #666; margin: 189px 0 auto; }

/* Embedded network simulator window */
.tracer { width: 751px; height: 399px; font-family: "Open Sans", sans-serif; font-size: 5.600px; color: #222; line-height: 1; display: flex; flex-direction: column; box-shadow: inset 1px 0 #ccc; }
.t-title { height: 11px; background: #f2f2f2; display: flex; align-items: center; gap: 2px; padding: 1px 0 0 2px; font-size: 6.100px; letter-spacing: -.26px; flex: none; }
.t-win { display: flex; gap: 18px; margin-left: auto; padding-right: 10px; }
.t-menu { height: 8px; display: flex; gap: 5.600px; align-items: center; padding: 2px 0 0 3px; flex: none; font-size: 5.100px; }
.t-menu span:first-child { margin-right: 1px; }
.t-tools { height: 14px; display: flex; align-items: center; border-bottom: 1px solid #ddd; flex: none; padding-left: .8px; }
.t-tools.one { border-top: 1px solid #eee; }
.t-tools.two { padding-top: 1px; }
.t-tools svg { width: 10px; height: 9px; margin: 0 1.050px; fill: #222; }
.t-tools .on { background: #cce4f7; }
.t-tools i { width: 1px; height: 10px; background: #ddd; margin: 0 .85px; }
.t-tools b { margin: 0 4px 0 auto; font: bold 8px "Liberation Sans", sans-serif; }
.t-bar { height: 12px; background: #049fd9; color: #e5f5fb; display: flex; align-items: center; flex: none; font-family: "Liberation Sans", sans-serif; font-size: 5.500px; }
.pill { display: flex; align-items: center; height: 11px; border: 1px solid #7fd0ef; border-radius: 6px; }
.pill svg { fill: #1a3c49; width: 7px; height: 8px; }
.solid { background: #fff; color: #111; border-color: #333; font-weight: bold; }
.logical, .physical, .realtime, .simu { gap: 1px; padding: 0 1px; }
.logical { width: 37px; font-size: 7.100px; }
.physical { width: 39px; margin-left: 1px; font-weight: bold; font-size: 7.100px; }
.xy { margin-left: 1px; font-size: 4.500px; }
.root { margin-left: auto; }
.mini { width: 17.500px; justify-content: center; margin-left: .6px; }
.clock { width: 31px; gap: 0; padding-left: 0; margin-left: 1px; font-size: 5.300px; }
.low .time { margin-left: 6px; }
.realtime { margin-left: auto; width: 43px; font-size: 7.400px; }
.simu { width: 45px; margin-left: 1px; font-size: 7.500px; }
.t-space { height: 278px; display: flex; justify-content: space-between; flex: none; border-right: 1px solid #bbb; }
.lbl { font: 5.200px "Liberation Sans", sans-serif; text-anchor: middle; fill: #222; }
.vscroll { width: 7px; background: #f0f0f0; padding: 8px 2px; }
.vscroll i { display: block; width: 3px; height: 46px; background: #777; }
.hscroll { height: 8px; background: #f0f0f0; padding: 3px 8px 3px 9px; flex: none; border-right: 1px solid #bbb; }
.hscroll i { display: block; width: 344px; height: 2px; background: #808080; }
.t-palette { height: 42px; display: flex; border-bottom: 1px solid #444; flex: none; }
.kinds { width: 82px; border-right: 1px solid #999; display: flex; flex-direction: column; }
.row { display: flex; height: 17px; gap: 2.300px; align-items: center; padding-left: 2.500px; }
.row svg { width: 11px; height: 9px; }
.row .low { height: 7px; }
.row .on { background: #a6ecf0; height: 12px; padding: 1px 0; }
.wl { height: 8px; line-height: 7px; border: solid #ddd; border-width: 1px 0; padding-left: 2px; font-family: "Liberation Sans", sans-serif; font-size: 5.400px; }
.devs { width: 662px; display: flex; flex-direction: column; }
.list { display: flex; height: 26px; padding: 2px 0 0 2px; gap: 2.650px; }
.list span { width: 13px; height: 13px; border: 1px solid #d0d0d0; border-radius: 2px; background: #eee; display: flex; flex-direction: column; align-items: center; font-size: 2.900px; color: #111; }
.list svg { width: 11px; height: 8px; }
.dscroll { height: 7px; background: #f0f0f0; padding: 2px 8px 2px 9px; }
.dscroll i { display: block; width: 434px; height: 3px; background: #808080; border: solid #bbb; border-width: 0 0 1px; }
.hint { border: 1px solid #555; height: 8px; text-align: center; line-height: 6px; font-family: "Liberation Sans", sans-serif; font-size: 5.100px; }
.fold { flex: 1; background: #f0f0f0; display: flex; align-items: center; justify-content: center; }

/* Status bar */
.status { display: flex; align-items: center; height: 28px; flex: none; background: #f4f4f4; border-bottom: 1px solid #b4b2b1; font-size: 13px; letter-spacing: -.1px; padding-left: 10px; }
.pg { width: 98px; flex: none; }
.wc { width: 1371px; flex: none; }
.focus { width: 69px; flex: none; display: flex; align-items: center; gap: 3px; letter-spacing: -.3px; }
.vm { width: 50px; height: 27px; display: flex; align-items: center; justify-content: center; }
.vm.on { background: #e0e0e0; }
.minus { margin-left: 7px; }
.slider { width: 126px; height: 14px; margin: 0 6px; background: linear-gradient(#666, #666) 0 50% / 100% 1px no-repeat; padding-left: 60px; }
.slider i { display: block; width: 6px; height: 14px; background: #555; }
.pct { margin-left: 16px; letter-spacing: -.5px; }

/* Taskbar */
.taskbar { display: flex; align-items: center; height: 59px; flex: none;
  background: linear-gradient(90deg, #f0efee 0, #efedea 130px, #e9e2df 240px, #dddddf 330px, #dfe0e5 470px, #eee0d5 590px, #dde7dd 680px, #e0e3e0 740px, #efd9db 805px, #dce0e4 860px, #cfe9e9 920px, #cceeea 1020px, #d3f1e6 1110px, #e0e8e0 1220px, #efdfd6 1300px, #efdce0 1400px, #edd9e2 1570px, #efdedc 1690px, #f2ebe7 1790px, #f1f0ef 1850px, #f1f0f0 1920px); }
.weather { margin-left: 25px; }
.wtext { display: flex; flex-direction: column; margin-left: 8px; width: 411px; font-size: 15.200px; letter-spacing: -.25px; line-height: 20px; padding-bottom: 4px; }
.wtext em { color: #5c5c5c; }
.start { flex: none; }
.tsearch { display: flex; align-items: center; width: 274px; height: 39px; margin-left: 17px; border-radius: 20px; background: rgba(255,255,255,.75); border: 1px solid rgba(180,170,170,.5); padding-left: 13px; font-size: 16.500px; letter-spacing: -.2px; color: #5a5a5a; flex: none; }
.tsearch span { margin-left: 12px; }
.apps { display: flex; margin-left: 2px; flex: none; }
.apps > span { width: 55.050px; height: 59px; display: flex; align-items: center; justify-content: center; position: relative; }
.apps b { position: absolute; left: 29px; top: 8px; width: 20px; height: 20px; border-radius: 50%; color: #fff; font-size: 14px; line-height: 20px; text-align: center; }
.yel { background: #fdc010; }
.blu { background: #0078d7; }
.pnk { background: #e8417c; }
.apps .run::after { content: ""; position: absolute; bottom: 4px; left: 24px; width: 8px; height: 4px; border-radius: 2px; background: #858383; }
.apps .active { width: 49px; height: 49px; margin: 5px 0 0 3px; background: rgba(255,255,255,.5); border-radius: 5px; }
.apps .active::after { content: ""; position: absolute; bottom: 0; left: 14px; width: 20px; height: 4px; border-radius: 2px; background: #0078d4; }
.tray { display: flex; align-items: center; margin-left: auto; padding-right: 25px; font-size: 15.200px; line-height: 20px; letter-spacing: -.2px; }
.od { margin-left: 22px; }
.lang { width: 40px; margin-left: 17px; padding-bottom: 2px; display: flex; flex-direction: column; align-items: center; }
.wifi { margin-left: 17px; }
.spk { margin-left: 10px; }
.bat { margin-left: 10px; }
.clock2 { display: flex; flex-direction: column; align-items: flex-end; width: 98px; padding-bottom: 4px; }
.num { width: 20px; height: 20px; margin-left: 9px; border-radius: 50%; background: #0078d4; color: #fff; font-size: 12.500px; text-align: center; }
```
